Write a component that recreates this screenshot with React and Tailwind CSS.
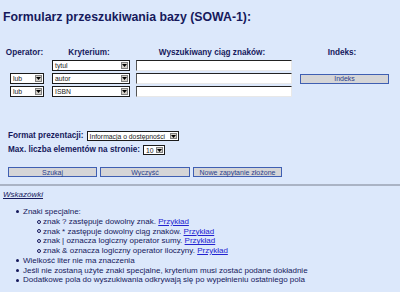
const navy = 'text-[#16195c]'

function FakeSelect({ value, width, className = '' }) {
  return (
    <div
      className={`flex h-full shrink-0 items-stretch border border-[#1a1a1a] bg-white font-normal ${className}`}
      style={{ width }}
    >
      <span className="flex-1 overflow-hidden whitespace-nowrap pl-[2px] text-[6.8px] leading-[9px] text-[#222]">
        {value}
      </span>
      <span className="m-[1px] flex w-[7px] items-center justify-center border border-[#808080] bg-[#d4d0c8]">
        <svg width="5" height="3" viewBox="0 0 5 3">
          <path d="M0 0h5L2.5 3z" fill="#000" />
        </svg>
      </span>
    </div>
  )
}

function TextBox() {
  return (
    <div className="h-full w-[156px] shrink-0 border-t border-l border-t-[#222] border-l-[#555] border-r border-b border-r-[#e8e8e8] border-b-[#e8e8e8] bg-white" />
  )
}

function Btn({ children, className = '' }) {
  return (
    <div
      className={`flex h-[10px] shrink-0 items-center justify-center border border-[#3f5fb2] bg-[#d5d5d7] text-[7px] leading-none text-[#2b3f8c] ${className}`}
    >
      {children}
    </div>
  )
}

const hints = [
  'znak ? zastępuje dowolny znak.',
  'znak * zastępuje dowolny ciąg znaków.',
  'znak | oznacza logiczny operator sumy.',
  'znak & oznacza logiczny operator iloczyny.',
]

const notes = [
  'Wielkość liter nie ma znaczenia',
  'Jeśli nie zostaną użyte znaki specjalne, kryterium musi zostać podane dokładnie',
  'Dodatkowe pola do wyszukiwania odkrywają się po wypełnieniu ostatniego pola',
]

function Disc() {
  return <span className="mr-[4px] ml-[16px] h-[3px] w-[3px] shrink-0 rounded-full bg-[#16195c]" />
}

export default function App() {
  return (
    <div className={`h-[292px] w-[400px] overflow-hidden bg-[#dce8fb] font-['Liberation_Sans',Arial,sans-serif] ${navy}`}>
      <h1 className="pt-[10px] pl-[3px] text-[12.3px] font-bold leading-[14px]">
        Formularz przeszukiwania bazy (SOWA-1):
      </h1>

      {/* search rows */}
      <div className="mt-[24px] flex text-[8.2px] font-bold leading-[10px]">
        <span className="w-[49px] text-center">Operator:</span>
        <span className="w-[80px] text-center">Kryterium:</span>
        <span className="w-[166px] text-center">Wyszukiwany ciąg znaków:</span>
        <span className="w-[94px] text-center">Indeks:</span>
      </div>

      <div className="mt-[2px] flex flex-col gap-[2px]">
        <div className="flex h-[11px] items-center pl-[10px]">
          <div className="w-[34px] shrink-0" />
          <FakeSelect value="tytul" width={78} className="ml-[8px]" />
          <div className="ml-[6px] h-full">
            <TextBox />
          </div>
        </div>
        <div className="flex h-[11px] items-center pl-[10px]">
          <FakeSelect value="lub" width={34} />
          <FakeSelect value="autor" width={78} className="ml-[8px]" />
          <div className="ml-[6px] h-full">
            <TextBox />
          </div>
          <Btn className="ml-[8px] w-[89px]">Indeks</Btn>
        </div>
        <div className="flex h-[11px] items-center pl-[10px]">
          <FakeSelect value="lub" width={34} />
          <FakeSelect value="ISBN" width={78} className="ml-[8px]" />
          <div className="ml-[6px] h-full">
            <TextBox />
          </div>
        </div>
      </div>

      {/* options */}
      <div className="mt-[34px] pl-[8px] text-[8.2px] font-bold leading-[10px]">
        <div className="flex h-[10px] items-center">
          <span>Format prezentacji:</span>
          <FakeSelect value="Informacja o dostępności" width={92} className="ml-[3px]" />
        </div>
        <div className="mt-[4px] flex h-[10px] items-center">
          <span>Max. liczba elementów na stronie:</span>
          <FakeSelect value="10" width={22} className="ml-[3px]" />
        </div>
        <div className="mt-[12px] flex gap-[3px] font-normal">
          <Btn className="w-[89px]">Szukaj</Btn>
          <Btn className="w-[90px]">Wyczyść</Btn>
          <Btn className="w-[89px]">Nowe zapytanie złożone</Btn>
        </div>
      </div>

      <div className="mt-[7px] h-[2px] bg-[#aab3c4]" />

      {/* hints */}
      <div className="mt-[4px] pl-[3px] text-[8px] leading-[10px]">
        <span className="italic underline">Wskazówki</span>
      </div>

      <div className="mt-[7px] text-[8px] leading-[9.75px]">
        <div className="flex items-center">
          <Disc />
          <span>Znaki specjalne:</span>
        </div>
        {hints.map((h) => (
          <div key={h} className="flex items-center pl-[37px]">
            <span className="mr-[2px] h-[4px] w-[4px] shrink-0 rounded-full border border-[#16195c]" />
            <span className="whitespace-nowrap">
              {h} <span className="text-[#2323d0] underline">Przykład</span>
            </span>
          </div>
        ))}
        {notes.map((n) => (
          <div key={n} className="flex items-center">
            <Disc />
            <span className="whitespace-nowrap">{n}</span>
          </div>
        ))}
      </div>
    </div>
  )
}
